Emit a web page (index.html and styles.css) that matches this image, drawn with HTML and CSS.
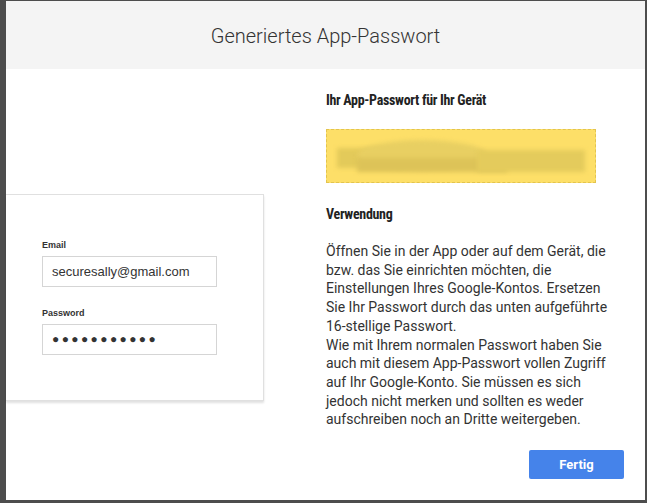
FILE: index.html
```html
<!DOCTYPE html>
<html lang="de">
<head>
<meta charset="utf-8">
<link rel="stylesheet" href="styles.css">
</head>
<body>
<div class="frame">
  <div class="dialog">
    <div class="dialog-header">
      <h1 class="dialog-title">Generiertes App-Passwort</h1>
    </div>
    <div class="dialog-body">
      <div class="left-col">
        <div class="login-card">
          <label class="field-label">Email</label>
          <div class="field-input">securesally@gmail.com</div>
          <label class="field-label">Password</label>
          <div class="field-input dots">●●●●●●●●●●●</div>
        </div>
      </div>
      <div class="right-col">
        <h2 class="section-title">Ihr App-Passwort für Ihr Gerät</h2>
        <div class="pw-box">
          <div class="smudge s1"></div>
          <div class="smudge s2"></div>
          <div class="smudge s3"></div>
          <div class="smudge s4"></div>
        </div>
        <h2 class="section-title usage">Verwendung</h2>
        <p class="usage-text">Öffnen Sie in der App oder auf dem Gerät, die bzw. das Sie einrichten möchten, die Einstellungen Ihres Google-Kontos. Ersetzen Sie Ihr Passwort durch das unten aufgeführte 16-stellige Passwort.<br>Wie mit Ihrem normalen Passwort haben Sie auch mit diesem App-Passwort vollen Zugriff auf Ihr Google-Konto. Sie müssen es sich jedoch nicht merken und sollten es weder aufschreiben noch an Dritte weitergeben.</p>
        <div class="actions">
          <button class="btn-primary">Fertig</button>
        </div>
      </div>
    </div>
  </div>
</div>
</body>
</html>
```

FILE: styles.css
```css
html, body {
  margin: 0;
  padding: 0;
}
body {
  background: #4d4d4d;
  width: 647px;
  height: 503px;
  overflow: hidden;
  font-family: Roboto, "Liberation Sans", sans-serif;
}
.frame {
  padding: 1px 2px 3px 6px;
}
.dialog {
  width: 639px;
  height: 499px;
  background: #fff;
  display: flex;
  flex-direction: column;
}
.dialog-header {
  height: 68px;
  background: #f4f4f4;
  display: flex;
  align-items: center;
  justify-content: center;
}
.dialog-title {
  margin: 0;
  font-weight: 300;
  font-size: 20px;
  color: #333;
  padding-top: 2px;
}
.dialog-body {
  flex: 1;
  display: flex;
}
.left-col {
  width: 320px;
  padding-top: 125px;
}
.login-card {
  width: 258px;
  height: 207px;
  box-sizing: border-box;
  padding: 45px 0 0 36px;
  border: 1px solid #e0e0e0;
  border-left: none;
  box-shadow: 0 2px 2px rgba(0,0,0,0.12);
  background: #fff;
  display: flex;
  flex-direction: column;
}
.field-label {
  font-family: "Liberation Sans", Arial, sans-serif;
  font-weight: bold;
  font-size: 9px;
  color: #333;
  margin-bottom: 6px;
}
.field-input {
  width: 175px;
  height: 31px;
  box-sizing: border-box;
  border: 1px solid #d5d5d5;
  font-family: "Liberation Sans", Arial, sans-serif;
  font-size: 13px;
  color: #333;
  padding-left: 9px;
  line-height: 29px;
  margin-bottom: 21px;
}
.field-input.dots {
  font-size: 12px;
  letter-spacing: 2.4px;
  color: #333;
}
.right-col {
  flex: 1;
  padding-top: 22px;
  display: flex;
  flex-direction: column;
}
.section-title {
  margin: 0;
  font-family: "Roboto Condensed", "Liberation Sans Narrow", Roboto, sans-serif;
  font-stretch: condensed;
  font-weight: bold;
  font-size: 14px;
  letter-spacing: -0.3px;
  line-height: 18px;
  color: #222;
}
.pw-box {
  position: relative;
  margin-top: 20px;
  width: 270px;
  height: 54px;
  box-sizing: border-box;
  background: #fddf68;
  border: 1px dashed #e3c44e;
  overflow: hidden;
}
.smudge {
  position: absolute;
  background: #e5cc5c;
  filter: blur(2px);
}
.s1 { left: 10px; top: 18px; width: 70px; height: 20px; background: #e3ca5a; }
.s2 { left: 30px; top: 10px; width: 130px; height: 30px; border-radius: 50%; background: #e8cf62; }
.s3 { left: 30px; top: 28px; width: 150px; height: 14px; background: #ddc358; }
.s4 { left: 150px; top: 20px; width: 108px; height: 22px; background: #e4cb5c; }
.usage {
  margin-top: 22px;
}
.usage-text {
  margin: 19px 0 0 0;
  font-size: 14px;
  line-height: 18.7px;
  color: #333;
  width: 290px;
}
.actions {
  display: flex;
  justify-content: flex-end;
  padding-right: 21px;
  margin-top: 21px;
}
.btn-primary {
  width: 95px;
  height: 29px;
  border: none;
  border-radius: 2px;
  background: #4583ea;
  color: #fff;
  font-family: Roboto, sans-serif;
  font-weight: bold;
  font-size: 13px;
}
```
